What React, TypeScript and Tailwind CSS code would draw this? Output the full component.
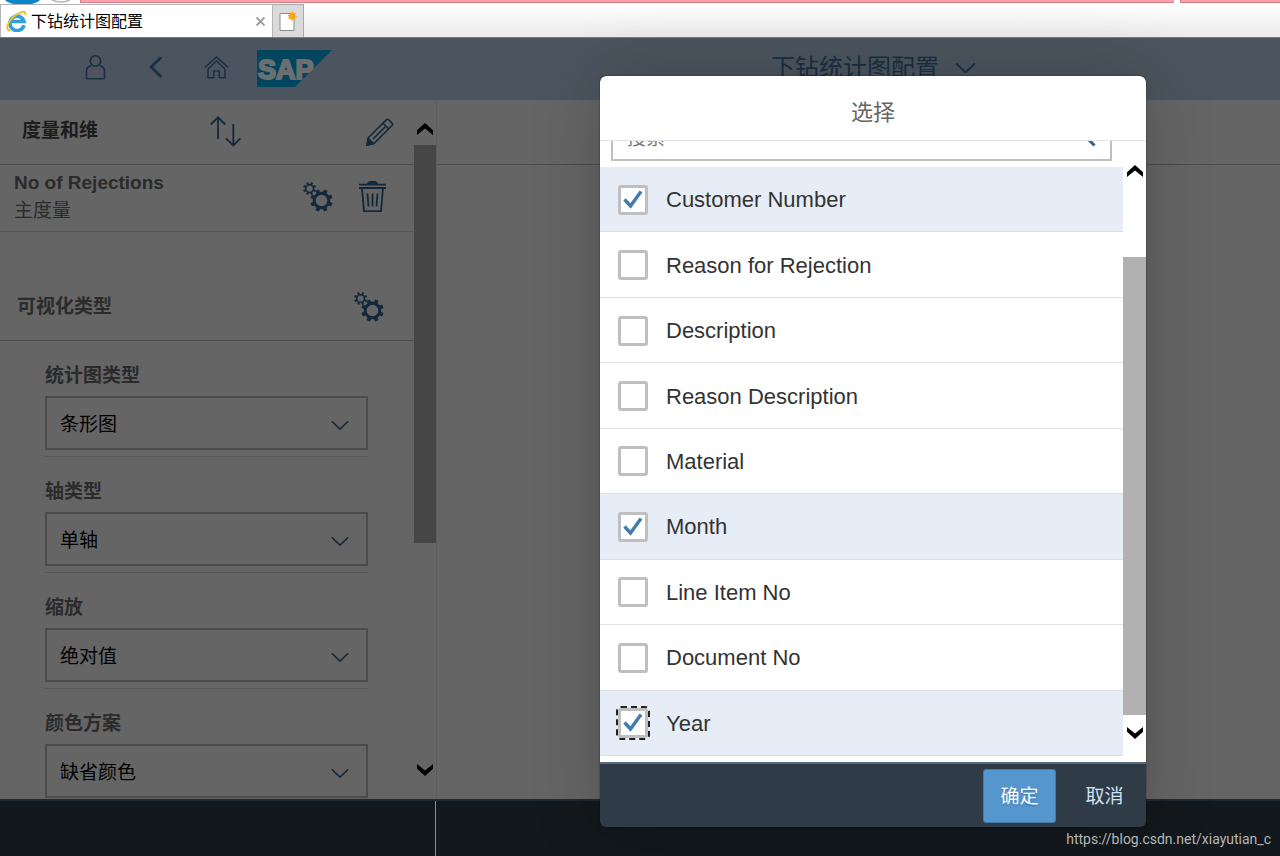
import React, { useState } from 'react';

type Field = { id: string; label: string; options: string[] };
type Dimension = { name: string; selected: boolean };

const fields: Field[] = [
  { id: 'chart-type', label: '统计图类型', options: ['条形图', '折线图'] },
  { id: 'axis-type', label: '轴类型', options: ['单轴', '双轴'] },
  { id: 'scaling', label: '缩放', options: ['绝对值', '百分比'] },
  { id: 'palette', label: '颜色方案', options: ['缺省颜色', '语义颜色'] },
];

const initialDimensions: Dimension[] = [
  { name: 'Customer Number', selected: true },
  { name: 'Reason for Rejection', selected: false },
  { name: 'Description', selected: false },
  { name: 'Reason Description', selected: false },
  { name: 'Material', selected: false },
  { name: 'Month', selected: true },
  { name: 'Line Item No', selected: false },
  { name: 'Document No', selected: false },
  { name: 'Year', selected: true },
];

function gearPath(cx: number, cy: number, outer: number, root: number, hole: number) {
  const teeth = 8;
  const points: string[] = [];
  for (let i = 0; i < teeth; i++) {
    const mid = (i / teeth) * Math.PI * 2 + Math.PI / teeth;
    const corners: [number, number][] = [
      [-0.22, root],
      [-0.17, outer],
      [0.17, outer],
      [0.22, root],
    ];
    corners.forEach(([offset, r]) => {
      points.push(`${(cx + Math.cos(mid + offset) * r).toFixed(2)} ${(cy + Math.sin(mid + offset) * r).toFixed(2)}`);
    });
  }
  return `M${points.join('L')}Z M${cx - hole} ${cy}a${hole} ${hole} 0 1 0 ${hole * 2} 0a${hole} ${hole} 0 1 0 ${-hole * 2} 0Z`;
}

function GearsIcon() {
  return (
    <svg width="30" height="30" viewBox="0 0 30 30" fill="#14283b" fillRule="evenodd">
      <path d={gearPath(6.6, 6.5, 6.6, 4.6, 3.1)} />
      <path d={gearPath(18.5, 18.5, 11.4, 8.8, 5.8)} />
    </svg>
  );
}

function TrashIcon() {
  return (
    <svg width="27" height="31" viewBox="0 0 27 31" fill="none" stroke="#14283b" strokeWidth="1.8">
      <path d="M9 3C9 1 11 .8 13.5 .8S18 1 18 3Z" fill="#14283b" />
      <path d="M0 3.6h27M0 7h27" />
      <path d="M3 7.500 5 30.100h17L24 7.500" />
      <path d="M8.500 12.500l1 13M13.500 12.500v13M18.500 12.500l-1 13" />
    </svg>
  );
}

function SortIcon() {
  return (
    <svg width="31" height="31" viewBox="0 0 31 31" fill="none" stroke="#14283b" strokeWidth="1.8">
      <path d="M8 23V1.500M.8 8.500 8 1.300l7.200 7.200" />
      <path d="M23.300 8v21.500M16 22.300l7.300 7.200 7.200-7.200" />
    </svg>
  );
}

function PencilIcon() {
  return (
    <svg width="28" height="28" viewBox="0 0 28 28" fill="none" stroke="#14283b" strokeWidth="1.6">
      <path d="M2.500 19.500 20.500 1.600Q21.500.8 22.500 1.600L26.200 5.300Q27 6.300 26.200 7.200L8.300 25.200 1 27Z" />
      <path d="M17 5.200l5.800 5.800M7 21 19.500 8.500" />
      <path d="M2.300 20.500 1 27l6.500-1.500Z" fill="#14283b" />
    </svg>
  );
}

function ChevronDown({ color, width }: { color: string; width: number }) {
  return (
    <svg width={width} height={width / 2} viewBox="0 0 20 10" fill="none" stroke={color} strokeWidth="1.8">
      <path d="M1 .4l9 8.600 9-8.600" />
    </svg>
  );
}

function ScrollArrow({ down = false }: { down?: boolean }) {
  return (
    <svg width="16" height="12" viewBox="0 0 16 12" className={down ? 'rotate-180' : ''}>
      <path d="M8 0l8 7.200V12L8 5.500 0 12V7.200Z" fill="#000" />
    </svg>
  );
}

function BrowserIcon() {
  return (
    <svg width="21" height="22" viewBox="0 0 21 22" fill="none">
      <path d="M18 15.200A7.200 7.200 0 1 1 18 11.500H5.500" stroke="#2f9fe0" strokeWidth="3.600" />
      <path d="M16 5.500A7 7 0 0 0 5.500 8" stroke="#8ed4f7" strokeWidth="1.200" />
      <path d="M4.500 20.800C-1.500 20.500 1.500 12 8 6.500S20.500 0 19.300 5.300" stroke="#f2c21c" strokeWidth="1.900" />
    </svg>
  );
}

function NewTabIcon() {
  return (
    <svg width="18" height="21" viewBox="0 0 18 21">
      <path d="M1 2.500h14v17H1Z" fill="#fff" stroke="#8a8a8a" />
      <path d="M13.500 0l1 2.500 2.500-.8-1 2.400 2 1.400-2.200 1 .6 2.500-2.400-1-1.500 2-.9-2.300-2.600.4 1.200-2.300L8.500 4l2.500-.4L11 1l1.800 1.300Z" fill="#f9a51a" />
    </svg>
  );
}

function BrowserChrome() {
  return (
    <div className="flex h-[38px] shrink-0 flex-col border-b border-[#777c82] bg-white">
      <div className="flex h-1 items-start overflow-hidden">
        <svg width="80" height="4" viewBox="0 0 80 4">
          <path d="M5 0h35q-3 3-9 4H14Q8 3 5 0Z" fill="#0c86c8" />
          <path d="M52 0q9 4 18 0" fill="none" stroke="#b5b5b5" strokeWidth="1.500" />
        </svg>
        <div className="h-[3px] flex-1 border-b border-l border-[#d37f86] bg-[#ff9fab]" />
        <div className="w-[6px]" />
        <div className="h-[3px] w-[100px] border-b border-l border-[#d37f86] bg-[#ff9fab]" />
      </div>
      <div className="flex flex-1 bg-linear-to-b from-white to-[#ebebeb]">
        <div className="flex w-[273px] items-center border border-b-0 border-[#b4b4b4] bg-white pr-[3px] pl-[5px]">
          <BrowserIcon />
          <span className="ml-1 flex-1 pt-px text-base leading-6 text-black">下钻统计图配置</span>
          <button type="button" aria-label="关闭" className="p-1">
            <svg width="9" height="9" viewBox="0 0 9 9" stroke="#999" strokeWidth="1.800">
              <path d="M.5.5l8 8M8.500.5l-8 8" />
            </svg>
          </button>
        </div>
        <button
          type="button"
          aria-label="新标签页"
          className="flex w-[31px] items-center justify-center border border-b-0 border-l-0 border-[#a8a8a8] bg-[#dadada]"
        >
          <NewTabIcon />
        </button>
      </div>
    </div>
  );
}

function ShellHeader() {
  return (
    <header className="flex h-[62px] shrink-0 items-center bg-[#4c555f] pb-[2px] pl-[85px]">
      <button type="button" aria-label="用户" className="mr-[43px]">
        <svg width="21" height="26" viewBox="0 0 21 26" fill="none" stroke="#1b2f42" strokeWidth="1.600">
          <circle cx="10.500" cy="6" r="5.200" />
          <path d="M6.500 10.500C3 11.500 1.500 13 1.500 16v7.800h18V16c0-3-1.500-4.500-5-5.500" />
        </svg>
      </button>
      <button type="button" aria-label="返回" className="mr-[41px]">
        <svg width="14" height="22" viewBox="0 0 14 22" fill="none" stroke="#1b2f42" strokeWidth="2.800">
          <path d="M12.500 0 2 10l10.500 10" />
        </svg>
      </button>
      <button type="button" aria-label="主页" className="mr-7">
        <svg width="25" height="24" viewBox="0 0 25 24" fill="none" stroke="#1b2f42" strokeWidth="1.500">
          <path d="M.8 11.500 12.500 1l11.700 10.500" />
          <path d="M4 13v8.800h5.800V15h5.400v6.800H21V13M4 13l8.500-8 8.500 8" />
        </svg>
      </button>
      <svg width="75" height="37" viewBox="0 0 75 37">
        <path d="M0 0h75L38 37H0Z" fill="#01455f" />
        <text
          x="1"
          y="29"
          fontFamily="'Liberation Sans', sans-serif"
          fontWeight="bold"
          fontSize="27"
          fill="#6c6f70"
          stroke="#6c6f70"
          strokeWidth="2"
        >
          SAP
        </text>
      </svg>
      <h1 className="ml-[439px] flex items-center gap-4 text-2xl text-[#1b2f42]">
        下钻统计图配置
        <ChevronDown color="#1b2f42" width={21} />
      </h1>
    </header>
  );
}

function SelectField({ field }: { field: Field }) {
  return (
    <div className="border-b border-[#595959] px-px pt-[21px] pb-[6px]">
      <label htmlFor={field.id} className="mb-[6px] block text-[19px] leading-7 font-bold text-[#2b2b2b]">
        {field.label}
      </label>
      <div className="relative">
        <select
          id={field.id}
          className="block h-[54px] w-full appearance-none border-2 border-[#4b4b4b] bg-transparent px-[13px] pt-1 text-[19px] text-black"
        >
          {field.options.map(option => (
            <option key={option}>{option}</option>
          ))}
        </select>
        <span className="pointer-events-none absolute inset-y-0 right-[19px] flex items-center pt-1">
          <ChevronDown color="#16293c" width={18} />
        </span>
      </div>
    </div>
  );
}

function SidePanel() {
  return (
    <aside className="flex w-[437px] shrink-0 border-r border-[#5d5d5d]">
      <div className="flex-1 overflow-hidden">
        <div className="flex h-[65px] items-center border-b border-[#4d4d4d] pr-5 pb-px pl-[22px]">
          <h2 className="w-[188px] text-[19px] font-bold text-[#1c1c1c]">度量和维</h2>
          <button type="button" aria-label="排序">
            <SortIcon />
          </button>
          <button type="button" aria-label="编辑" className="ml-auto">
            <PencilIcon />
          </button>
        </div>
        <div className="flex h-[67px] items-center border-b border-[#585858] pr-7 pb-[3px] pl-[14px]">
          <div className="flex-1 text-[19px] leading-7 text-[#2b2b2b]">
            <p className="font-bold">No of Rejections</p>
            <p>主度量</p>
          </div>
          <button type="button" aria-label="设置" className="mr-[26px]">
            <GearsIcon />
          </button>
          <button type="button" aria-label="删除">
            <TrashIcon />
          </button>
        </div>
        <div className="mt-[42px] flex h-[67px] items-center justify-between border-b border-[#4d4d4d] pr-[30px] pl-[17px]">
          <h2 className="text-[19px] font-bold text-[#2b2b2b]">可视化类型</h2>
          <button type="button" aria-label="可视化设置">
            <GearsIcon />
          </button>
        </div>
        <div className="pr-[45px] pl-11">
          {fields.map(field => (
            <SelectField key={field.id} field={field} />
          ))}
        </div>
      </div>
      <div className="flex w-[22px] flex-col items-center pt-[23px] pb-[23px]">
        <ScrollArrow />
        <div className="mt-[10px] h-[398px] w-full bg-[#464646]" />
        <div className="mt-auto flex">
          <ScrollArrow down />
        </div>
      </div>
    </aside>
  );
}

function SelectDialog() {
  const [dimensions, setDimensions] = useState(initialDimensions);

  const toggle = (name: string) => {
    setDimensions(dimensions.map(d => (d.name === name ? { ...d, selected: !d.selected } : d)));
  };

  return (
    <div
      role="dialog"
      aria-labelledby="dialog-title"
      className="absolute top-[76px] right-[134px] flex w-[546px] flex-col overflow-hidden rounded-md bg-[#2f3c48] shadow-[0_0_2px_rgba(0,0,0,0.5),0_0_70px_rgba(0,0,0,0.2)]"
    >
      <div className="flex h-[65px] items-center justify-center rounded-t-md border-b border-[#e5e5e5] bg-white pt-2">
        <h2 id="dialog-title" className="text-[22px] text-[#666]">选择</h2>
      </div>
      <div className="flex h-[621px] bg-white">
        <div className="flex flex-1 flex-col justify-end overflow-hidden pb-[6px]">
          <div className="relative mr-[11px] mb-[6px] ml-[11px] shrink-0">
            <input
              type="search"
              aria-label="搜索"
              placeholder="搜索"
              className="block h-12 w-full border-2 border-[#bfbfbf] px-[14px] pt-1 text-[19px] placeholder:text-[#777]"
            />
            <svg className="absolute top-3 right-4" width="22" height="22" viewBox="0 0 22 22" fill="none" stroke="#346187">
              <circle cx="8.500" cy="8.500" r="6.500" strokeWidth="2" />
              <path d="M13.500 13.500l7 7" strokeWidth="3" />
            </svg>
          </div>
          <ul className="flex h-[589px] shrink-0 flex-col">
            {dimensions.map(d => (
              <li key={d.name} className={`flex-1 border-b border-[#e0e0e0] ${d.selected ? 'bg-[#e6edf6]' : 'bg-white'}`}>
                <label className="flex h-full items-center gap-[18px] pt-px pl-[18px] text-[22px] text-[#333]">
                  <span className="relative flex">
                    <input
                      type="checkbox"
                      checked={d.selected}
                      onChange={() => toggle(d.name)}
                      className={`size-[30px] appearance-none rounded-[3px] border-[3px] border-[#bfbfbf] bg-white ${
                        d.name === 'Year' ? 'outline-2 outline-dashed outline-[#222]' : ''
                      }`}
                    />
                    {d.selected && (
                      <svg className="pointer-events-none absolute inset-0" width="30" height="30" viewBox="0 0 30 30" fill="none" stroke="#427cac" strokeWidth="3.400">
                        <path d="M6.500 14.500l6 6.500L23 6.500" />
                      </svg>
                    )}
                  </span>
                  {d.name}
                </label>
              </li>
            ))}
          </ul>
        </div>
        <div className="flex w-[23px] flex-col items-center pt-[24px] pb-[23px]">
          <ScrollArrow />
          <div className="mt-20 mb-3 w-full flex-1 bg-[#b1b1b1]" />
          <ScrollArrow down />
        </div>
      </div>
      <div className="flex h-[65px] items-center justify-end gap-3 border-t-2 border-[#526b80] pr-[5px] text-[19px]">
        <button type="button" className="h-[54px] w-[73px] rounded-[3px] border border-[#427cac] bg-[#5496cd] pt-1 text-white text-shadow-sm">
          确定
        </button>
        <button type="button" className="h-[54px] w-[73px] pt-1 text-[#d0e3f5]">取消</button>
      </div>
    </div>
  );
}

function App() {
  return (
    <div
      lang="zh-CN"
      className="relative flex h-screen flex-col overflow-hidden bg-[#656565] font-['Liberation_Sans','Noto_Sans_CJK_SC',sans-serif]"
    >
      <BrowserChrome />
      <ShellHeader />
      <main className="flex min-h-0 flex-1">
        <SidePanel />
        <section className="flex-1">
          <div className="h-[65px] border-b border-[#4d4d4d]" />
        </section>
      </main>
      <footer className="flex h-[57px] shrink-0 border-t-2 border-[#1e2a33] bg-[#12181c]">
        <div className="w-[436px] border-r border-[#8c8c8c]" />
      </footer>
      <SelectDialog />
      <a
        href="https://blog.csdn.net/xiayutian_c"
        className="absolute right-[9px] bottom-[5px] font-[Roboto,sans-serif] text-sm leading-6 text-[#b4b6b8]"
      >
        https://blog.csdn.net/xiayutian_c
      </a>
    </div>
  );
}

export default App;
